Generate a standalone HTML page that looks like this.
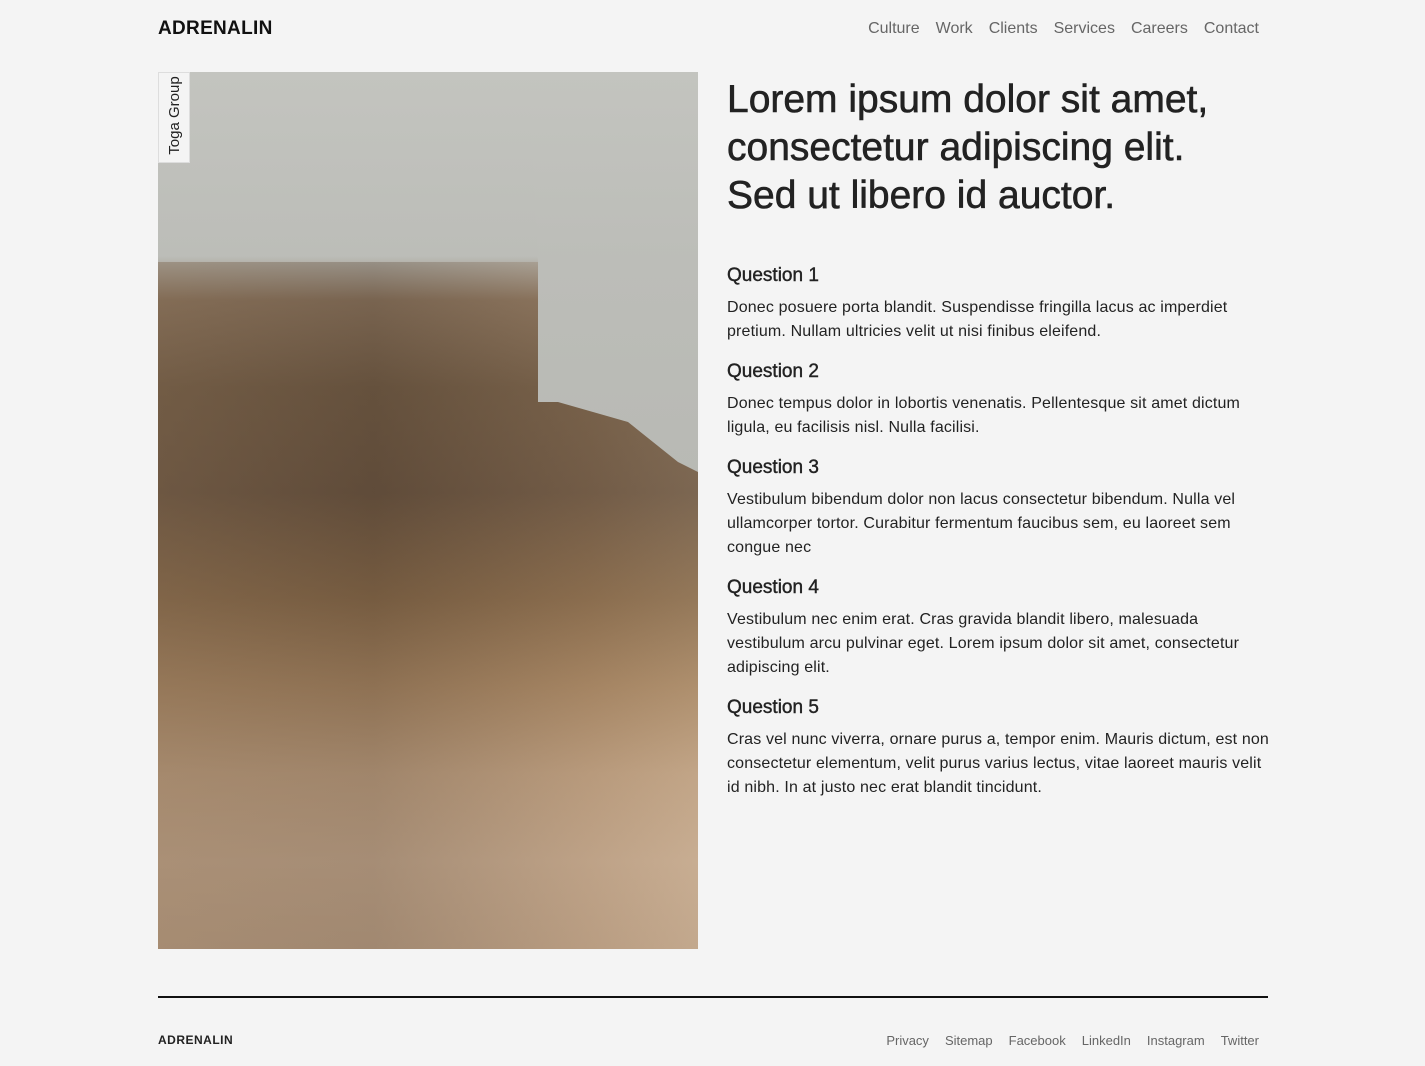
<!DOCTYPE html>
<html><head><style>
body{margin:0;background:#f4f4f4;font-family:"Liberation Sans",sans-serif;color:#222;width:1425px;height:1066px;overflow:hidden;position:relative}
.logo{position:absolute;left:158px;top:18px;font-weight:bold;font-size:19px;letter-spacing:.3px;color:#111}
.nav{position:absolute;right:166px;top:20px;font-size:16px;color:#666}
.nav span{margin-left:16px}
.img{position:absolute;left:158px;top:72px;width:540px;height:877px;overflow:hidden;
background:linear-gradient(180deg,#c3c4bf 0%,#bcbdb8 21%,#8a7560 26%,#6e5a45 36%,#665240 48%,#86694a 60%,#a98865 70%,#c3a587 80%,#cbb096 90%,#c4a98f 100%)}
.rs{position:absolute;left:0;top:190px;width:540px;height:687px;background:linear-gradient(90deg,rgba(120,95,70,.4),rgba(80,60,42,.3) 40%,rgba(150,120,90,.25) 80%,rgba(190,165,135,.25))}
.sky{position:absolute;left:0;top:0;width:540px;height:420px;background:linear-gradient(180deg,#c3c4bf 0,#bcbdb8 190px,#b8b9b4 420px);clip-path:polygon(380px 0,540px 0,540px 400px,520px 390px,470px 350px,400px 330px,380px 330px,380px 190px,370px 0)}
.tag{position:absolute;left:158px;top:72px;width:32px;height:91px;background:#f4f4f4;border:1px solid #ddd;box-sizing:border-box}
.tag div{position:absolute;left:-30px;top:34px;width:91px;transform:rotate(-90deg);font-size:15px;text-align:center;color:#222}
h1{position:absolute;left:727px;top:76px;margin:0;font-size:39px;line-height:48px;font-weight:normal;color:#222;width:500px;-webkit-text-stroke:.6px #222}
.q{position:absolute;left:727px;width:542px}
.q h3{margin:0 0 8px;font-size:19px;font-weight:normal;line-height:24px;-webkit-text-stroke:.4px #222}
.q p{margin:0;font-size:16px;line-height:24px;letter-spacing:.15px}
.line{position:absolute;left:158px;top:996px;width:1110px;height:2px;background:#111}
.flogo{position:absolute;left:158px;top:1033px;font-weight:bold;font-size:12px;letter-spacing:.5px}
.fnav{position:absolute;right:166px;top:1033px;font-size:13px;color:#666}
.fnav span{margin-left:16px}
</style></head><body>
<div class="logo">ADRENALIN</div>
<div class="nav"><span>Culture</span><span>Work</span><span>Clients</span><span>Services</span><span>Careers</span><span>Contact</span></div>
<div class="img"><div class="rs"></div><div class="sky"></div></div>
<div class="tag"><div>Toga Group</div></div>
<h1>Lorem ipsum dolor sit amet, consectetur adipiscing elit. Sed ut libero id auctor.</h1>
<div class="q" style="top:264px"><h3>Question 1</h3><p>Donec posuere porta blandit. Suspendisse fringilla lacus ac imperdiet pretium. Nullam ultricies velit ut nisi finibus eleifend.</p></div>
<div class="q" style="top:360px"><h3>Question 2</h3><p>Donec tempus dolor in lobortis venenatis. Pellentesque sit amet dictum ligula, eu facilisis nisl. Nulla facilisi.</p></div>
<div class="q" style="top:456px"><h3>Question 3</h3><p>Vestibulum bibendum dolor non lacus consectetur bibendum. Nulla vel ullamcorper tortor. Curabitur fermentum faucibus sem, eu laoreet sem congue nec</p></div>
<div class="q" style="top:576px"><h3>Question 4</h3><p>Vestibulum nec enim erat. Cras gravida blandit libero, malesuada vestibulum arcu pulvinar eget. Lorem ipsum dolor sit amet, consectetur adipiscing elit.</p></div>
<div class="q" style="top:696px"><h3>Question 5</h3><p>Cras vel nunc viverra, ornare purus a, tempor enim. Mauris dictum, est non consectetur elementum, velit purus varius lectus, vitae laoreet mauris velit id nibh. In at justo nec erat blandit tincidunt.</p></div>
<div class="line"></div>
<div class="flogo">ADRENALIN</div>
<div class="fnav"><span>Privacy</span><span>Sitemap</span><span>Facebook</span><span>LinkedIn</span><span>Instagram</span><span>Twitter</span></div>
</body></html>
